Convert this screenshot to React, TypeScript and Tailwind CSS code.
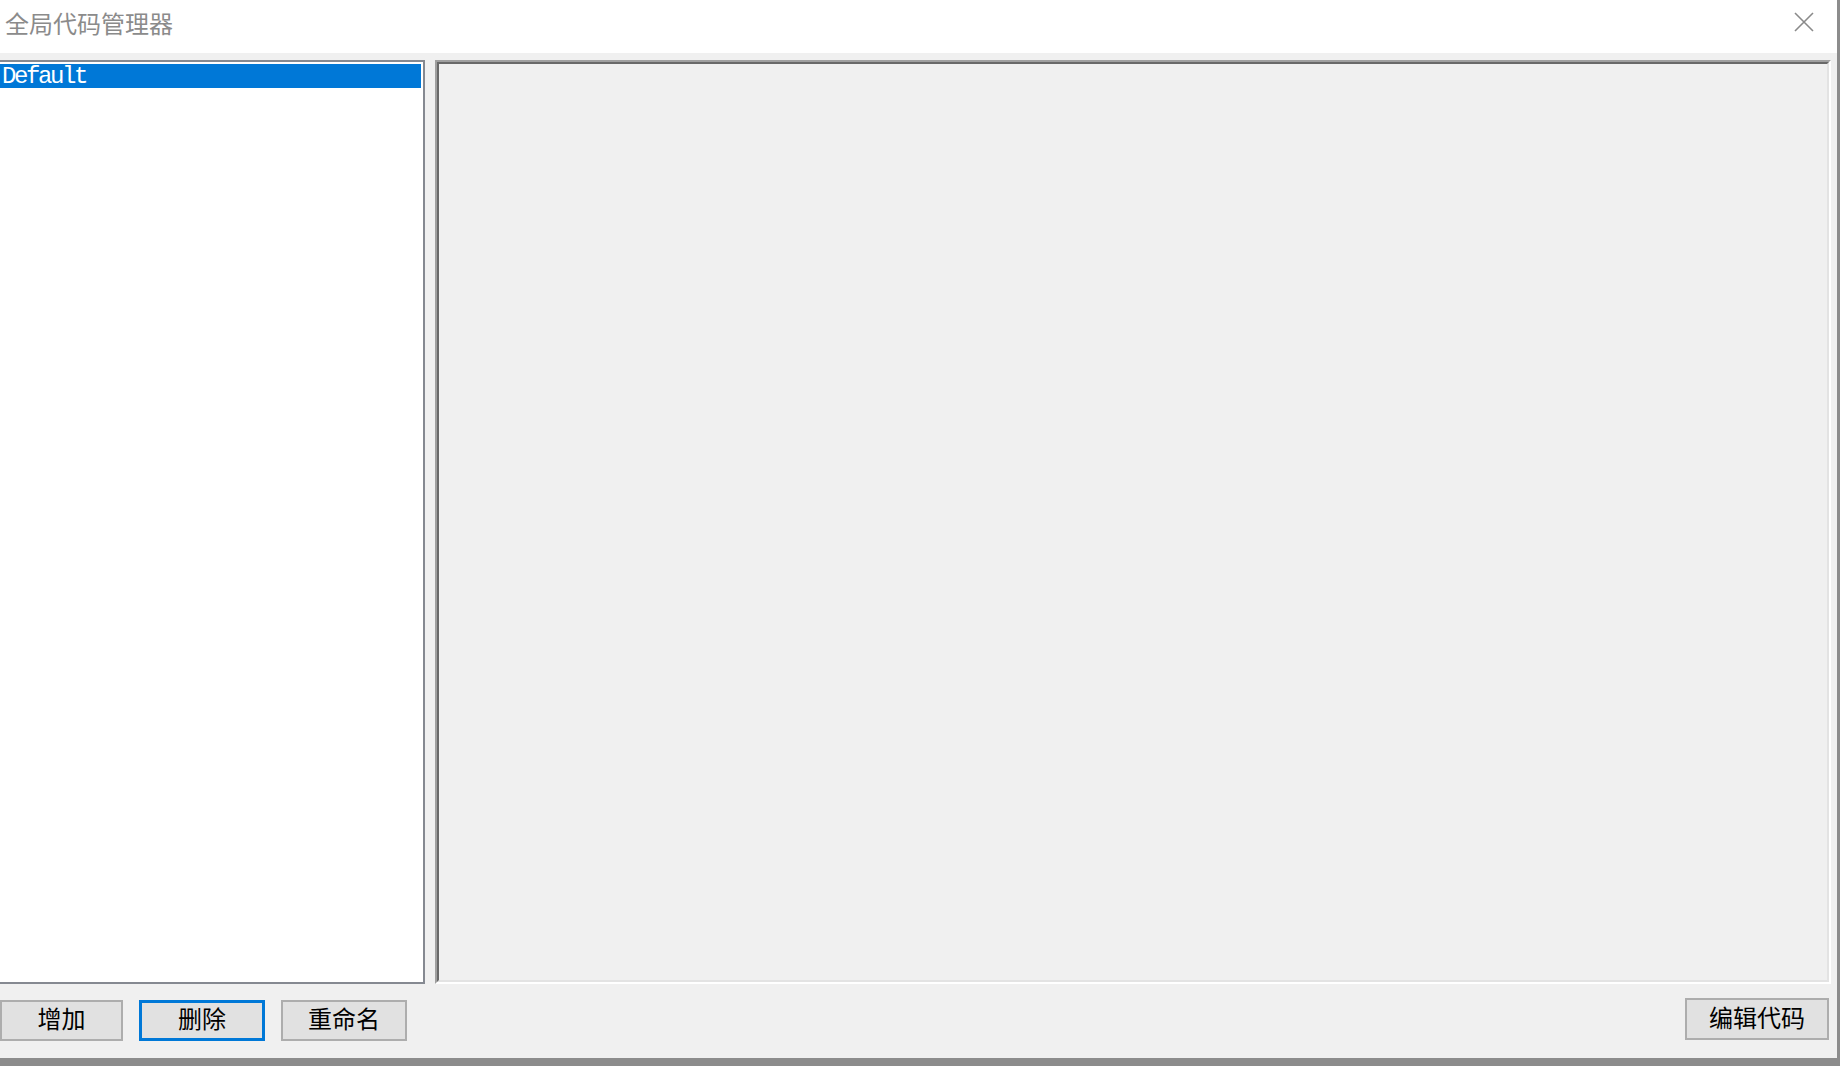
import { useState } from 'react';

const cjk = '"Noto Sans CJK SC", "Noto Sans", sans-serif';

interface ButtonProps {
  label: string;
  focused?: boolean;
  width: string;
}

function WinButton({ label, focused, width }: ButtonProps) {
  return (
    <button
      className={`${width} h-[41px] flex items-center justify-center pb-[5px] bg-[#e1e1e1] text-black text-[24px] leading-[24px] ${
        focused ? 'border-[3px] border-[#0078d7]' : 'border-2 border-[#adadad]'
      }`}
      style={{ fontFamily: cjk }}
    >
      {label}
    </button>
  );
}

export default function App() {
  const [selected, setSelected] = useState<string>('Default');
  const items = ['Default'];

  return (
    <div className="w-[1840px] h-[1066px] bg-[#8c8c8c] overflow-hidden">
      <div className="w-[1837px] h-[1058px] bg-[#f0f0f0] flex flex-col">
        {/* title bar */}
        <div className="h-[53px] bg-white flex items-start justify-between pl-[5px] pr-[23px]">
          <div
            className="pt-[11px] text-[24px] leading-[24px] text-[#8b8b8b]"
            style={{ fontFamily: cjk }}
          >
            全局代码管理器
          </div>
          <svg className="mt-[12px]" width="20" height="20" viewBox="0 0 20 20">
            <path d="M1 1 L19 19 M19 1 L1 19" stroke="#8a8a8a" strokeWidth="1.6" />
          </svg>
        </div>

        {/* main area */}
        <div className="flex pt-[7px] gap-[10px]">
          <div className="w-[425px] h-[924px] bg-white border-t-2 border-r-2 border-b-2 border-[#858991] pt-[2px] pr-[2px]">
            {items.map((item) => (
              <div
                key={item}
                onClick={() => setSelected(item)}
                className={`h-[24px] pl-[2px] pt-[2px] text-[24px] leading-[22px] tracking-[-2.4px] whitespace-nowrap ${
                  selected === item ? 'bg-[#0078d7] text-white' : 'text-black'
                }`}
                style={{ fontFamily: '"Liberation Mono", monospace' }}
              >
                {item}
              </div>
            ))}
          </div>
          <div className="w-[1396px] h-[924px] border-2 border-t-[#a0a0a0] border-l-[#a0a0a0] border-r-white border-b-white">
            <div className="w-full h-full bg-[#f0f0f0] border-2 border-t-[#696969] border-l-[#696969] border-r-[#e3e3e3] border-b-[#e3e3e3]" />
          </div>
        </div>

        {/* buttons */}
        <div className="flex justify-between pr-[8px]">
          <div className="flex gap-[16px] pt-[16px]">
            <WinButton label="增加" width="w-[123px]" />
            <WinButton label="删除" width="w-[126px]" focused />
            <WinButton label="重命名" width="w-[126px]" />
          </div>
          <div className="pt-[14px]">
            <button
              className="w-[144px] h-[42px] flex items-center justify-center pb-[5px] bg-[#e1e1e1] border-2 border-[#adadad] text-black text-[24px] leading-[24px]"
              style={{ fontFamily: cjk }}
            >
              编辑代码
            </button>
          </div>
        </div>
      </div>
    </div>
  );
}
